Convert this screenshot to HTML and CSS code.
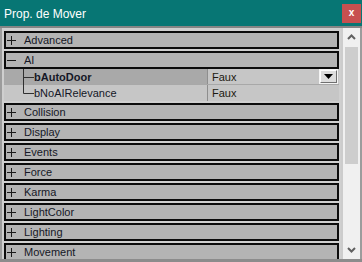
FILE: index.html
```html
<!DOCTYPE html>
<html>
<head>
<meta charset="utf-8">
<link rel="stylesheet" href="styles.css">
</head>
<body>
<div class="window">
  <div class="titlebar">
    <span class="title">Prop. de Mover</span>
    <div class="close">x</div>
  </div>
  <div class="sep"></div>
  <div class="body">
    <div class="list">
      <div class="cat"><svg class="exp" width="9" height="9" viewBox="0 0 9 9"><path d="M0 4.5H9M4.5 0V9" stroke="#1a1a1a" stroke-width="1"/></svg><span>Advanced</span></div>
      <div class="cat open"><svg class="exp" width="9" height="9" viewBox="0 0 9 9"><path d="M0 4.5H9" stroke="#1a1a1a" stroke-width="1"/></svg><span>AI</span></div>
      <div class="prop selected">
        <div class="pname"><svg class="tree" width="30" height="16" viewBox="0 0 30 16"><path d="M19.5 0V16M19.5 8.5H30" stroke="#303030" stroke-width="1"/></svg><span class="bold">bAutoDoor</span></div>
        <div class="pval"><span>Faux</span><div class="drop"><svg width="9" height="5" viewBox="0 0 9 5"><path d="M0 0H9L4.5 5Z" fill="#000"/></svg></div></div>
      </div>
      <div class="prop last">
        <div class="pname"><svg class="tree" width="30" height="16" viewBox="0 0 30 16"><path d="M19.5 0V8.5M19.5 8.5H30" stroke="#303030" stroke-width="1"/></svg><span>bNoAIRelevance</span></div>
        <div class="pval"><span>Faux</span></div>
      </div>
      <div class="cat"><svg class="exp" width="9" height="9" viewBox="0 0 9 9"><path d="M0 4.5H9M4.5 0V9" stroke="#1a1a1a" stroke-width="1"/></svg><span>Collision</span></div>
      <div class="cat"><svg class="exp" width="9" height="9" viewBox="0 0 9 9"><path d="M0 4.5H9M4.5 0V9" stroke="#1a1a1a" stroke-width="1"/></svg><span>Display</span></div>
      <div class="cat"><svg class="exp" width="9" height="9" viewBox="0 0 9 9"><path d="M0 4.5H9M4.5 0V9" stroke="#1a1a1a" stroke-width="1"/></svg><span>Events</span></div>
      <div class="cat"><svg class="exp" width="9" height="9" viewBox="0 0 9 9"><path d="M0 4.5H9M4.5 0V9" stroke="#1a1a1a" stroke-width="1"/></svg><span>Force</span></div>
      <div class="cat"><svg class="exp" width="9" height="9" viewBox="0 0 9 9"><path d="M0 4.5H9M4.5 0V9" stroke="#1a1a1a" stroke-width="1"/></svg><span>Karma</span></div>
      <div class="cat"><svg class="exp" width="9" height="9" viewBox="0 0 9 9"><path d="M0 4.5H9M4.5 0V9" stroke="#1a1a1a" stroke-width="1"/></svg><span>LightColor</span></div>
      <div class="cat"><svg class="exp" width="9" height="9" viewBox="0 0 9 9"><path d="M0 4.5H9M4.5 0V9" stroke="#1a1a1a" stroke-width="1"/></svg><span>Lighting</span></div>
      <div class="cat"><svg class="exp" width="9" height="9" viewBox="0 0 9 9"><path d="M0 4.5H9M4.5 0V9" stroke="#1a1a1a" stroke-width="1"/></svg><span>Movement</span></div>
    </div>
    <div class="scrollbar">
      <div class="arrow"><svg width="9" height="6" viewBox="0 0 9 6"><path d="M1 5L4.5 1.5L8 5" fill="none" stroke="#606060" stroke-width="2"/></svg></div>
      <div class="track"><div class="thumb"></div></div>
      <div class="arrow"><svg width="9" height="6" viewBox="0 0 9 6"><path d="M1 1L4.5 4.5L8 1" fill="none" stroke="#606060" stroke-width="2"/></svg></div>
    </div>
  </div>
</div>
</body>
</html>
```
FILE: styles.css
```css
html, body {
  margin: 0;
  padding: 0;
  width: 362px;
  height: 262px;
  overflow: hidden;
  background: #c8c8c8;
}
.window {
  width: 362px;
  height: 262px;
  box-sizing: border-box;
  display: flex;
  flex-direction: column;
  background: #cccccc;
  border-bottom: 3px solid #8c8c8c;
  font-family: "Liberation Sans", Arial, sans-serif;
  font-size: 11px;
  color: #141726;
  overflow: hidden;
}
.titlebar {
  height: 26px;
  flex: none;
  background: #077674;
  display: flex;
  align-items: center;
  justify-content: space-between;
  padding-left: 4px;
}
.title {
  color: #ffffff;
  font-size: 12px;
  padding-top: 1px;
}
.close {
  width: 19px;
  height: 19px;
  margin-right: 1px;
  background: #c75050;
  color: #ffffff;
  font-weight: bold;
  font-size: 10px;
  display: flex;
  align-items: center;
  justify-content: center;
  line-height: 1;
}
.sep {
  height: 2px;
  flex: none;
  background: #858585;
}
.body {
  flex: 1;
  min-height: 0;
  display: flex;
  border-left: 2px solid #9c9c9c;
  border-right: 2px solid #9c9c9c;
  overflow: hidden;
}
.list {
  flex: 1;
  padding: 3px 2px 0 2px;
  display: flex;
  flex-direction: column;
  overflow: hidden;
  background: #cfcfcf;
}
.cat {
  flex: none;
  height: 18px;
  box-sizing: border-box;
  border: 2px solid #0c0c0c;
  background: #b4b4b4;
  margin-bottom: 2px;
  display: flex;
  align-items: center;
}
.cat.open {
  margin-bottom: 0;
}
.exp {
  margin-left: 1px;
  margin-right: 8px;
  flex: none;
}
.prop {
  flex: none;
  height: 16px;
  display: flex;
  background: #c6c6c6;
  border-bottom: 1px solid #a8a8a8;
  box-sizing: border-box;
}
.prop.last {
  margin-bottom: 2px;
  border-bottom: none;
}
.pname {
  width: 204px;
  flex: none;
  display: flex;
  align-items: center;
  border-right: 1px solid #8e8e8e;
  box-sizing: border-box;
}
.prop.selected .pname {
  background: #a9a9a9;
}
.tree {
  flex: none;
  align-self: flex-start;
}
.bold {
  font-weight: bold;
}
.pval {
  flex: 1;
  display: flex;
  align-items: center;
  justify-content: space-between;
  padding-left: 4px;
  color: #1c1a10;
}
.drop {
  width: 17px;
  height: 13px;
  box-sizing: border-box;
  margin-right: 2px;
  border: 1px solid #ffffff;
  border-right-color: #707070;
  border-bottom-color: #707070;
  outline: 1px solid #f4f4f4;
  background: #dedede;
  display: flex;
  align-items: center;
  justify-content: center;
}
.scrollbar {
  width: 17px;
  flex: none;
  margin-left: 2px;
  background: #f0f0f0;
  display: flex;
  flex-direction: column;
}
.arrow {
  height: 18px;
  flex: none;
  display: flex;
  align-items: center;
  justify-content: center;
}
.track {
  flex: 1;
  padding: 1px 2px;
}
.thumb {
  height: 117px;
  background: #cdcdcd;
}
```
